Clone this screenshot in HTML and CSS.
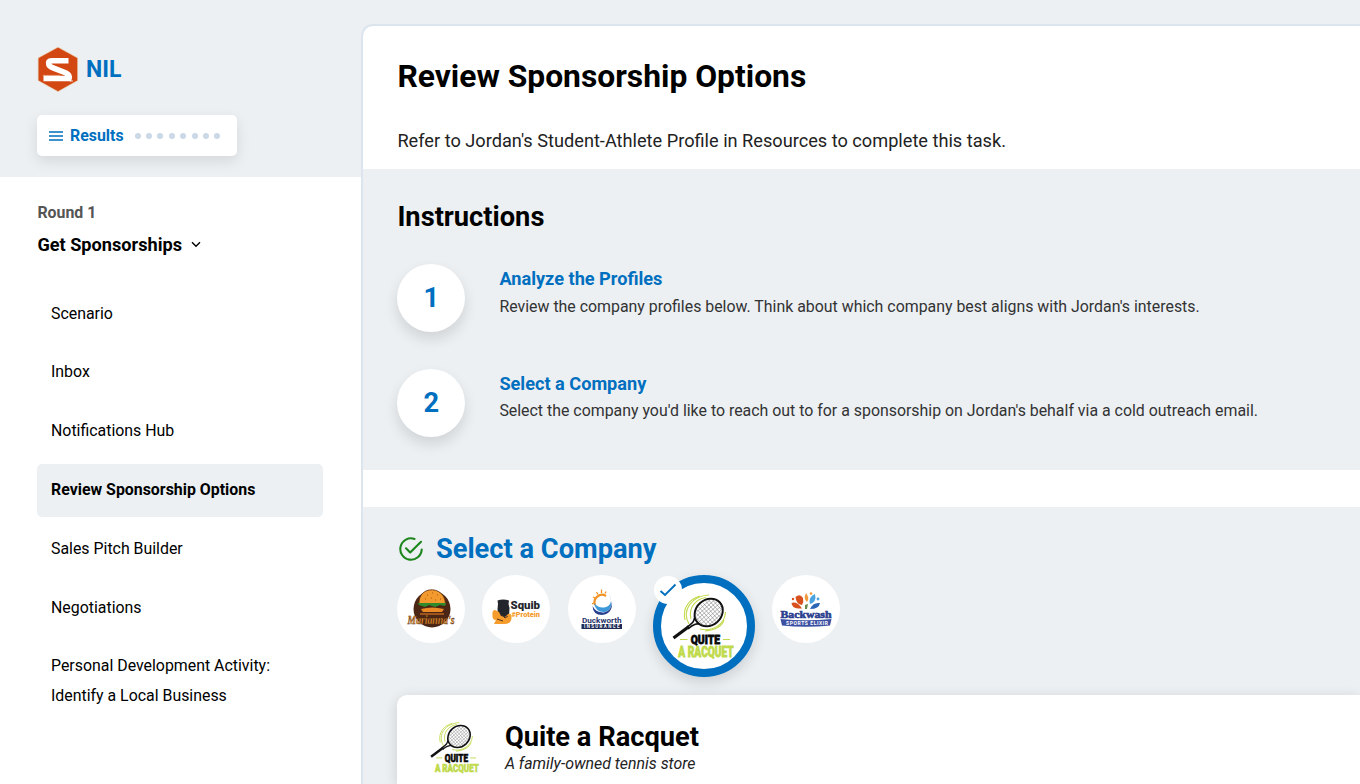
FILE: index.html
```html
<!DOCTYPE html>
<html lang="en">
<head>
    <meta charset="UTF-8">
    <meta name="viewport" content="width=device-width, initial-scale=1.0">
    <title>NIL</title>
    <link rel="stylesheet" href="styles.css">
</head>
<body>
    <!-- shared logo, used in the picker and in the card -->
    <svg class="defs">
        <symbol id="racquet" viewBox="0 0 64 68">
            <g fill="none" stroke="#c0da4c" stroke-width="1.1">
                <path d="M18 31C10 17 21 3 38 2"/>
                <path d="M14 27C11 14 19 6 29 3"/>
                <path d="M20 26C17 14 25 6 35 4.500"/>
                <path d="M29 36C42 39 54 31 54.500 19"/>
                <path d="M34 38C44 37 51 33 53 27"/>
            </g>
            <path d="M24 21C24 28 22 30 16 34M33 31C26 30 22 31 17 36" fill="none" stroke="#111" stroke-width="1.700"/>
            <g transform="rotate(-42 37.7 19.5)">
                <ellipse cx="37.7" cy="19.5" rx="15" ry="12.800" fill="#fff" stroke="#111" stroke-width="2"/>
                <path d="M25 14V25M28 11V28M31 10V30M34 8V31M37 8V32M40 8V31M43 9V30M46 10V29M49 13V26M29 11H47M26 14H50M24 17H52M24 20H52M24 23H52M26 26H50M29 29H47" stroke="#777" stroke-width=".5"/>
            </g>
            <path d="M18 33.500L2.500 45" stroke="#111" stroke-width="3.200"/>
            <path d="M9 46.5H16.5M52 46.5H59" stroke="#c0da4c" stroke-width="1.2"/>
            <text x="19.7" y="51" textLength="29.3" lengthAdjust="spacingAndGlyphs" class="rq1">QUITE</text>
            <text x="7.3" y="64" textLength="55.4" lengthAdjust="spacingAndGlyphs" class="rq2">A RACQUET</text>
        </symbol>
    </svg>
    <div id="wrap">
        <aside id="side">
            <div id="sidetop">
                <div class="logo">
                    <svg width="42" height="46" viewBox="0 0 42 46">
                        <path d="M21 1.2L40.6 12V34.5L21 45.6L1.2 34.5V12Z" fill="#d34712" stroke="#e9c9a0" stroke-width=".6"/>
                        <path d="M31.5 14.7H14.5Q10.6 14.7 11.8 18.3Q12.5 20.5 16 21.8L29 27Q33 29 32 32.5H6.5" fill="none" stroke="#fff" stroke-width="5.600"/>
                        <path d="M5.8 29.4H23" stroke="#f3b99b" stroke-width=".8"/>
                        <path d="M33 35H36" stroke="#fff" stroke-width=".8"/>
                    </svg>
                    <span>NIL</span>
                </div>
                <div class="results">
                    <svg width="14" height="10" viewBox="0 0 14 10"><path d="M0 1H14M0 5H14M0 9H14" stroke="#006fbf" stroke-width="1.3"/></svg>
                    <b>Results</b>
                    <div class="dots"><i></i><i></i><i></i><i></i><i></i><i></i><i></i><i></i></div>
                </div>
            </div>
            <p class="round">Round 1</p>
            <h3 class="phase">Get Sponsorships
                <svg width="10" height="7" viewBox="0 0 10 7"><path d="M1 1.2L5 5.2L9 1.2" fill="none" stroke="#000" stroke-width="1.4"/></svg>
            </h3>
            <ul class="menu">
                <li>Scenario</li>
                <li>Inbox</li>
                <li>Notifications Hub</li>
                <li class="on">Review Sponsorship Options</li>
                <li>Sales Pitch Builder</li>
                <li>Negotiations</li>
                <li>Personal Development Activity: Identify a Local Business</li>
            </ul>
        </aside>
        <main id="main">
            <section class="intro">
                <h1>Review Sponsorship Options</h1>
                <p>Refer to Jordan's Student-Athlete Profile in Resources to complete this task.</p>
            </section>
            <section class="inst">
                <h2>Instructions</h2>
                <div class="step">
                    <div class="num">1</div>
                    <div>
                        <h4>Analyze the Profiles</h4>
                        <p>Review the company profiles below. Think about which company best aligns with Jordan's interests.</p>
                    </div>
                </div>
                <div class="step">
                    <div class="num">2</div>
                    <div>
                        <h4>Select a Company</h4>
                        <p>Select the company you'd like to reach out to for a sponsorship on Jordan's behalf via a cold outreach email.</p>
                    </div>
                </div>
            </section>
            <section class="select">
                <h2>
                    <svg width="24" height="24" viewBox="0 0 24 24" fill="none" stroke="#1c861c" stroke-width="2.1" stroke-linecap="round" stroke-linejoin="round">
                        <path d="M15.5 1.9A10.7 10.7 0 1 0 22.7 12.6"/>
                        <path d="M7 11.3L11.2 15.5L22 4.8"/>
                    </svg>
                    <span>Select a Company</span>
                </h2>
                <div class="picks">
                    <div class="pick">
                        <!-- burger -->
                        <svg width="68" height="68" viewBox="0 0 68 68">
                            <circle cx="35" cy="34" r="18.5" fill="#4b2614"/>
                            <path d="M22 29C21 10 48 10 48.5 29Z" fill="#f29a2e" stroke="#5b2d12" stroke-width=".8"/>
                            <path d="M30 20h1M35 18h1M40 20h1M28 24h1M34 23h1M38 25h1M43 24h1" stroke="#a95a13"/>
                            <path d="M21 28H49L48 31L43 30L38 32L32 30L28 32L22 30Z" fill="#2f8a2b"/>
                            <path d="M24 34Q35 31 47 34L45 37H26Z" fill="#e98928"/>
                            <path d="M23 39H47" stroke="#b86420" stroke-width="1.500"/>
                            <text x="10.5" y="49" textLength="47" lengthAdjust="spacingAndGlyphs" class="marianna">Marianna's</text>
                        </svg>
                    </div>
                    <div class="pick">
                        <!-- strongman with shaker -->
                        <svg width="68" height="68" viewBox="0 0 68 68">
                            <path d="M15.5 25.5Q21 23.5 27 25.5L26.5 29L27.500 33L27 41Q22 44 16 40L15.5 34L16 29Z" fill="#22252b"/>
                            <path d="M10.5 40Q10 35 13 35L17 37L19 41L23 42L26 39Q30 38 29.5 43Q29 49 23 49H12L14 45Q10 45 10.5 40Z" fill="#f59c2c"/>
                            <path d="M20 40L23 43L26 41M15 44L21 46" stroke="#52341c" fill="none"/>
                            <text x="28.500" y="34" textLength="29.500" lengthAdjust="spacingAndGlyphs" class="squib">Squib</text>
                            <text x="29.5" y="41.5" textLength="28.5" lengthAdjust="spacingAndGlyphs" class="protein">#Protein</text>
                        </svg>
                    </div>
                    <div class="pick">
                        <!-- sun over waves -->
                        <svg width="68" height="68" viewBox="0 0 68 68">
                            <path d="M27 30A7.5 7.5 0 0 1 38 21" fill="none" stroke="#f39224" stroke-width="2.2"/>
                            <path d="M24 29L25.5 28M25 22L27 23M28.5 17L30 19.5M33.5 14.5V18M38 16.5L37 18.5" stroke="#f39224" stroke-width="1.3"/>
                            <path d="M41 19Q46 29 38 32Q31 34 26 28Q28 38 37 37Q47 34 41 19Z" fill="#3c98d8"/>
                            <path d="M44 26Q44 36 36 37.5Q28 38 24.5 31Q25 40 34 40Q45 39 44 26Z" fill="#27408d"/>
                            <text x="14" y="47.5" textLength="39.5" lengthAdjust="spacingAndGlyphs" class="duck">Duckworth</text>
                            <rect x="13.5" y="49" width="40.5" height="5" fill="#1e2b57"/>
                            <text x="16" y="53.2" textLength="35.5" class="insur">INSURANCE</text>
                        </svg>
                    </div>
                    <div class="pick on">
                        <span class="tick"><svg width="18" height="14" viewBox="0 0 18 14"><path d="M1.5 8L6 12L16.5 1.5" fill="none" stroke="#006fbf" stroke-width="1.9"/></svg></span>
                        <svg width="64" height="68"><use href="#racquet"/></svg>
                    </div>
                    <div class="pick">
                        <!-- splash -->
                        <svg width="68" height="68" viewBox="0 0 68 68">
                            <path d="M23.5 22Q28 18 31 23Q32 27 30 30Q24 29 23.5 22Z" fill="#d9501f"/>
                            <path d="M19.5 28Q25 26 30 33.5H26Q20 33 19.5 28Z" fill="#d9501f"/>
                            <path d="M34 18Q38 23 35 27Q31 24 34 18Z" fill="#f2993a"/>
                            <path d="M43 19Q45 27 38 29Q36 22 43 19Z" fill="#4aa3df"/>
                            <path d="M48 28Q47 34 38 34Q41 27 48 28Z" fill="#2b65b5"/>
                            <path d="M33 30L36 29L35 34H33Z" fill="#6a8b4b"/>
                            <circle cx="39" cy="18.5" r="1.3" fill="#f2993a"/>
                            <circle cx="21" cy="24" r="1.2" fill="#d9501f"/>
                            <circle cx="46" cy="24" r="1.4" fill="#4aa3df"/>
                            <text x="8.5" y="42.5" textLength="51" lengthAdjust="spacingAndGlyphs" class="back">Backwash</text>
                            <path d="M8.5 44Q34 46.5 59.5 44L58 50.5Q34 53 10 50.5Z" fill="#3c50a3"/>
                            <text x="14" y="49.8" textLength="42" class="sports">SPORTS ELIXIR</text>
                        </svg>
                    </div>
                </div>
                <div class="card">
                    <svg width="51" height="54"><use href="#racquet"/></svg>
                    <div>
                        <h2>Quite a Racquet</h2>
                        <p>A family-owned tennis store</p>
                    </div>
                </div>
            </section>
        </main>
    </div>
</body>
</html>
```

FILE: styles.css
```css
*{
    margin: 0;
    padding: 0;
    box-sizing: border-box;
}
body{
    height: 100vh;
    overflow: hidden;
    font-family: Roboto, "Liberation Sans", sans-serif;
    color: #000;
    background-color: #ecf0f3;
}
svg{
    display: block;
    flex-shrink: 0;
}
.defs{
    display: none;
}
#wrap{
    display: flex;
    height: 100vh;
}

/* sidebar */
#side{
    width: 361px;
    flex-shrink: 0;
    background-color: #fff;
}
#sidetop{
    height: 177px;
    padding: 46px 37px 0;
    background-color: #ecf0f3;
}
.logo{
    display: flex;
    align-items: center;
    gap: 7px;
    height: 46px;
    color: #006fbf;
    font-size: 23px;
    font-weight: 700;
}
.results{
    display: flex;
    align-items: center;
    width: 200px;
    height: 41px;
    margin-top: 23px;
    padding-left: 12px;
    border-radius: 5px;
    background-color: #fff;
    box-shadow: 0 5px 14px rgba(0,0,0,0.1);
    color: #006fbf;
    font-size: 15.9px;
}
.results b{
    margin: 0 11px 0 7px;
}
.dots{
    display: flex;
    gap: 5.4px;
}
.dots i{
    width: 6px;
    height: 6px;
    border-radius: 50%;
    background-color: #cbd8e6;
}
.round{
    margin: 26px 0 0 37.4px;
    font-size: 15.9px;
    line-height: 20px;
    font-weight: 700;
    color: #555;
}
.phase{
    display: flex;
    align-items: center;
    gap: 9px;
    margin: 10px 0 0 37.4px;
    font-size: 18.15px;
    line-height: 24px;
}
.phase svg{
    margin-top: -1px;
}
.menu{
    width: 286px;
    margin: 30.2px 0 0 37.4px;
    list-style: none;
}
.menu li{
    margin-bottom: 5.8px;
    padding: 11.5px 13.6px;
    border-radius: 5px;
    font-size: 15.9px;
    line-height: 30px;
}
.menu .on{
    background-color: #ecf0f3;
    font-weight: 700;
}

/* content */
#main{
    flex: 1;
    min-width: 0;
    margin-top: 24px;
    border-top: 2px solid #dce4ee;
    border-left: 2px solid #dce4ee;
    border-top-left-radius: 12px;
    background-color: #fff;
}
.intro{
    height: 143px;
    padding: 30px 34.4px 0;
}
.intro h1{
    font-size: 31.8px;
    line-height: 40px;
}
.intro p{
    margin-top: 33px;
    font-size: 18.18px;
    line-height: 24px;
    color: #222;
}
.inst{
    height: 301px;
    padding: 32px 34.4px 0;
    background-color: #ecf0f3;
}
.inst h2{
    margin-bottom: 31.3px;
    font-size: 27.25px;
    line-height: 32px;
}
.step{
    display: flex;
    gap: 34px;
    height: 68px;
    margin-bottom: 36.4px;
}
.num{
    width: 68px;
    height: 68px;
    border-radius: 50%;
    background-color: #fff;
    box-shadow: 0 7px 14px rgba(0,0,0,0.12);
    color: #006fbf;
    font-size: 27.25px;
    font-weight: 700;
    line-height: 68px;
    text-align: center;
}
.step h4{
    margin-top: 3px;
    color: #006fbf;
    font-size: 18.15px;
    line-height: 24px;
}
.step p{
    margin-top: 3.4px;
    font-size: 15.9px;
    line-height: 24px;
    color: #333;
}
.select{
    height: 277px;
    margin-top: 37px;
    padding: 25px 0 0 34.4px;
    background-color: #ecf0f3;
}
.select > h2{
    display: flex;
    align-items: center;
    gap: 12.5px;
    padding-left: 2px;
    color: #006fbf;
    font-size: 27.25px;
    line-height: 34px;
}
.picks{
    display: flex;
    gap: 17.1px;
    height: 102px;
    margin-top: 9px;
}
.pick{
    width: 68px;
    height: 68px;
    border-radius: 50%;
    background-color: #fff;
}
.pick.on{
    position: relative;
    width: 102px;
    height: 102px;
    padding: 10px 10.5px;
    border: 8px solid #006fbf;
    box-shadow: 0 5px 14px rgba(0,0,0,0.14);
}
.tick{
    position: absolute;
    top: -7px;
    left: -7px;
    display: flex;
    align-items: center;
    justify-content: center;
    width: 28px;
    height: 28px;
    border-radius: 50%;
    background-color: #fff;
}
.card{
    display: flex;
    gap: 25px;
    height: 89px;
    margin-top: 18px;
    padding: 25px 31.5px 0;
    border-top-left-radius: 10px;
    background-color: #fff;
    box-shadow: 0 3px 14px rgba(0,0,0,0.14);
}
.card > svg{
    margin-top: 1px;
}
.card h2{
    font-size: 27.25px;
    line-height: 34px;
}
.card p{
    font-size: 15.9px;
    line-height: 20px;
    font-style: italic;
    color: #222;
}

/* logo lettering */
.rq1, .rq2{
    font-size: 13px;
    font-weight: 900;
    stroke: #111;
    stroke-width: 0.8;
}
.rq2{
    font-size: 14px;
    fill: #c0da4c;
    stroke: #c0da4c;
}
.marianna{
    font-family: "Liberation Serif", serif;
    font-size: 12px;
    font-weight: 700;
    font-style: italic;
    fill: #f29a2e;
    stroke: #4b2614;
    stroke-width: 0.4;
}
.squib{
    font-size: 11px;
    font-weight: 900;
    fill: #22252b;
}
.protein{
    font-size: 7px;
    font-weight: 900;
    fill: #f59c2c;
}
.duck{
    font-size: 8px;
    font-weight: 700;
    fill: #27346b;
}
.insur{
    font-size: 4.5px;
    font-weight: 700;
    fill: #fff;
}
.back{
    font-family: "Liberation Serif", serif;
    font-size: 10.5px;
    font-weight: 700;
    fill: #2b3f8f;
    stroke: #2b3f8f;
    stroke-width: 0.6;
}
.sports{
    font-size: 5px;
    font-weight: 700;
    fill: #fff;
}
```
